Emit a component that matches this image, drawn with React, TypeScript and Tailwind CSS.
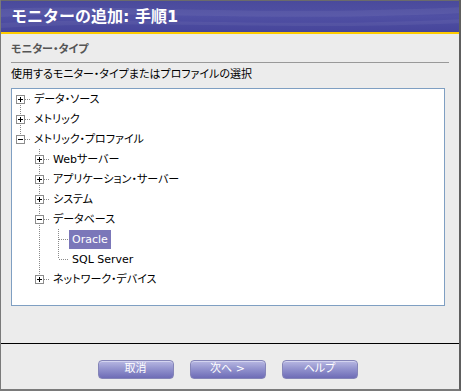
import React from "react";

type Cell = "blank" | "pipe" | "tee" | "last" | "first";

type Row = {
  prefix: Cell[];
  conn: Cell;
  exp?: "+" | "-";
  label: string;
  selected?: boolean;
};

const rows: Row[] = [
  { prefix: [], conn: "first", exp: "+", label: "データ・ソース" },
  { prefix: [], conn: "tee", exp: "+", label: "メトリック" },
  { prefix: [], conn: "last", exp: "-", label: "メトリック・プロファイル" },
  { prefix: ["blank"], conn: "tee", exp: "+", label: "Webサーバー" },
  { prefix: ["blank"], conn: "tee", exp: "+", label: "アプリケーション・サーバー" },
  { prefix: ["blank"], conn: "tee", exp: "+", label: "システム" },
  { prefix: ["blank"], conn: "tee", exp: "-", label: "データベース" },
  { prefix: ["blank", "pipe"], conn: "tee", label: "Oracle", selected: true },
  { prefix: ["blank", "pipe"], conn: "last", label: "SQL Server" },
  { prefix: ["blank"], conn: "last", exp: "+", label: "ネットワーク・デバイス" },
];

const jp = { fontFamily: '"DejaVu Sans", "Noto Sans CJK JP", sans-serif' };

function TreeCell({ kind, exp }: { kind: Cell; exp?: "+" | "-" }) {
  const dot = { stroke: "#8a8a8a", strokeWidth: 1, strokeDasharray: "1 1" };
  return (
    <svg width="19" height="20" className="shrink-0">
      {kind === "pipe" || kind === "tee" ? <line x1="8.5" y1="0" x2="8.5" y2="20" {...dot} /> : null}
      {kind === "last" ? <line x1="8.5" y1="0" x2="8.5" y2="10" {...dot} /> : null}
      {kind === "first" ? <line x1="8.5" y1="10" x2="8.5" y2="20" {...dot} /> : null}
      {kind !== "blank" && kind !== "pipe" ? <line x1="9" y1="10.5" x2="19" y2="10.5" {...dot} /> : null}
      {exp ? (
        <g>
          <rect x="4.5" y="6.5" width="8" height="8" fill="#fff" stroke="#8c8c8c" />
          <line x1="6" y1="10.5" x2="11" y2="10.5" stroke="#000" />
          {exp === "+" ? <line x1="8.5" y1="8" x2="8.5" y2="13" stroke="#000" /> : null}
        </g>
      ) : null}
    </svg>
  );
}

function Btn({ children }: { children: React.ReactNode }) {
  return (
    <button className="w-[76px] h-[19px] rounded-[4px] border border-[#8585b8] bg-gradient-to-b from-[#b8b8e2] via-[#9090cc] to-[#6e6cb6] text-white text-[11px] leading-none flex items-center justify-center pb-[3px] shadow-[inset_0_1px_0_#d4d4f0] [font-feature-settings:'palt']">
      {children}
    </button>
  );
}

export default function App() {
  return (
    <div
      className="w-[461px] h-[391px] bg-[#ececec] border-l border-b-2 border-r-2 border-l-[#7a7a7a] border-r-[#5e5e5e] border-b-[#7a7a7a] flex flex-col overflow-hidden"
      style={jp}
    >
      {/* header */}
      <div className="relative h-[32px] bg-gradient-to-b from-[#4a4a9c] via-[#5050a4] to-[#46459a] border-t border-[#6b6b6b]">
        <svg className="absolute inset-0" width="461" height="31" viewBox="0 0 461 31">
          <path d="M0 8 C120 2 240 16 461 6 L461 12 C260 22 120 8 0 16 Z" fill="#fff" opacity="0.06" />
          <path d="M0 22 C140 14 260 28 461 18 L461 22 C280 30 150 18 0 27 Z" fill="#fff" opacity="0.05" />
        </svg>
        <div className="relative pl-[10px] pt-[6px] text-white font-bold text-[16px] leading-[20px]">
          モニターの追加: 手順1
        </div>
      </div>
      <div className="h-[2px] bg-[#ffcc00]" />

      {/* body */}
      <div className="pl-[10px] [font-feature-settings:'palt']">
        <div className="mt-[9px] h-[14px] text-[11px] leading-[14px] font-bold text-[#555]">
          モニター・タイプ
        </div>
        <div className="mt-[5px] h-px w-[438px] bg-[#999]" />
        <div className="mt-[5px] h-[14px] text-[11px] leading-[14px] text-black">
          使用するモニター・タイプまたはプロファイルの選択
        </div>
        <div className="mt-[6px] w-[434px] h-[218px] bg-white border border-[#7f9fc2]">
          {rows.map((r, i) => (
            <div key={i} className="flex h-[20px] items-center text-[11px] text-black">
              {r.prefix.map((c, j) => (
                <TreeCell key={j} kind={c} />
              ))}
              <TreeCell kind={r.conn} exp={r.exp} />
              <div
                className={
                  r.selected
                    ? "h-[19px] px-[3px] bg-[#7b77b9] text-white leading-[19px]"
                    : "h-[19px] px-[3px] leading-[19px]"
                }
              >
                {r.label}
              </div>
            </div>
          ))}
        </div>
      </div>

      <div className="mt-[37px] h-px bg-black" />

      <div className="flex justify-center gap-[16px] mt-[16px] pr-[5px]">
        <Btn>取消</Btn>
        <Btn>次へ &gt;</Btn>
        <Btn>ヘルプ</Btn>
      </div>
    </div>
  );
}
